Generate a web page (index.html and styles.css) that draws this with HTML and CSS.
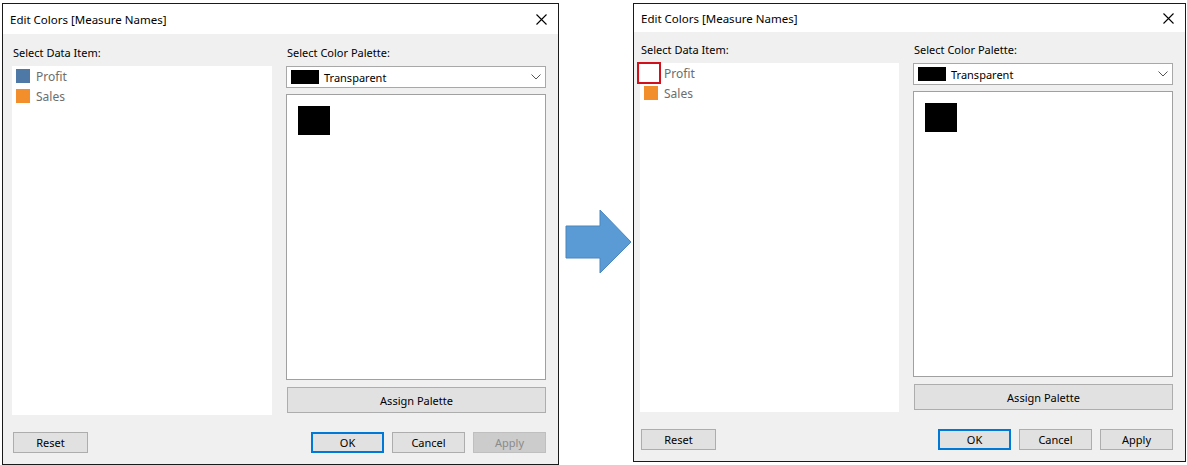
FILE: index.html
```html
<!DOCTYPE html>
<html lang="en">
<head>
    <meta charset="UTF-8">
    <title>Edit Colors</title>
    <link rel="stylesheet" href="styles.css">
</head>
<body>
    <div class="page">
        <div class="dlg dlg-a">
            <div class="title">
                <span>Edit Colors [Measure Names]</span>
                <svg class="close" width="11" height="11" viewBox="0 0 11 11"><path d="M0.5 0.5L10.5 10.5M10.5 0.5L0.5 10.5" stroke="#000" stroke-width="1.1"/></svg>
            </div>
            <div class="body">
                <div class="col">
                    <p class="label">Select Data Item:</p>
                    <div class="list">
                        <div class="item"><span class="sw blue"></span>Profit</div>
                        <div class="item"><span class="sw orange"></span>Sales</div>
                    </div>
                </div>
                <div class="col">
                    <p class="label">Select Color Palette:</p>
                    <div class="select">
                        <span class="chip"></span>
                        <span class="sel-text">Transparent</span>
                        <svg class="chev" width="10" height="6" viewBox="0 0 10 6"><path d="M0.5 0.5L5 5L9.5 0.5" fill="none" stroke="#555" stroke-width="1"/></svg>
                    </div>
                    <div class="palette"><span class="big-chip"></span></div>
                    <button class="btn assign">Assign Palette</button>
                </div>
            </div>
            <div class="foot">
                <button class="btn reset">Reset</button>
                <div class="foot-right">
                    <button class="btn ok">OK</button>
                    <button class="btn">Cancel</button>
                    <button class="btn disabled">Apply</button>
                </div>
            </div>
        </div>

        <div class="arrow-col">
            <svg width="68" height="66" viewBox="0 0 68 66"><polygon points="1,17 35,17 35,1 66,33 35,64 35,49 1,49" fill="#5b9bd5" stroke="#4a86bf" stroke-width="1"/></svg>
        </div>

        <div class="dlg dlg-b">
            <div class="title">
                <span>Edit Colors [Measure Names]</span>
                <svg class="close" width="11" height="11" viewBox="0 0 11 11"><path d="M0.5 0.5L10.5 10.5M10.5 0.5L0.5 10.5" stroke="#000" stroke-width="1.1"/></svg>
            </div>
            <div class="body">
                <div class="col">
                    <p class="label">Select Data Item:</p>
                    <div class="list">
                        <div class="item"><span class="sw empty"></span>Profit<span class="mark"></span></div>
                        <div class="item"><span class="sw orange"></span>Sales</div>
                    </div>
                </div>
                <div class="col">
                    <p class="label">Select Color Palette:</p>
                    <div class="select">
                        <span class="chip"></span>
                        <span class="sel-text">Transparent</span>
                        <svg class="chev" width="10" height="6" viewBox="0 0 10 6"><path d="M0.5 0.5L5 5L9.5 0.5" fill="none" stroke="#555" stroke-width="1"/></svg>
                    </div>
                    <div class="palette"><span class="big-chip"></span></div>
                    <button class="btn assign">Assign Palette</button>
                </div>
            </div>
            <div class="foot">
                <button class="btn reset">Reset</button>
                <div class="foot-right">
                    <button class="btn ok">OK</button>
                    <button class="btn">Cancel</button>
                    <button class="btn">Apply</button>
                </div>
            </div>
        </div>
    </div>
</body>
</html>
```

FILE: styles.css
```css
*{
    margin: 0;
    padding: 0;
    box-sizing: border-box;
}
body{
    background: #fff;
    font-family: "Noto Sans", "Open Sans", sans-serif;
    font-size: 11px;
    color: #000;
}
.page{
    display: flex;
    align-items: flex-start;
    padding: 3px 0 0 2px;
}

/* dialog */
.dlg{
    display: flex;
    flex-direction: column;
    background: #f0f0f0;
    border: 1px solid #1a1a1a;
}
.dlg-a{
    width: 557px;
    height: 462px;
}
.dlg-b{
    width: 553px;
    height: 459px;
}
.title{
    display: flex;
    justify-content: space-between;
    align-items: center;
    background: #fff;
    height: 30px;
    padding: 0 11px 0 7px;
    font-size: 11.5px;
}
.dlg-b .title{
    height: 28px;
    padding-right: 11px;
}
.body{
    display: flex;
    gap: 14px;
    padding: 12px 0 0 9px;
}
.dlg-b .body{
    padding: 11px 0 0 6px;
}
.col{
    display: flex;
    flex-direction: column;
    width: 260px;
}
.dlg-b .col:first-child{
    width: 259px;
}
.label{
    height: 14px;
    line-height: 14px;
    margin-bottom: 6px;
    padding-left: 1px;
}

/* data items */
.list{
    background: #fff;
    height: 349px;
}
.item{
    position: relative;
    display: flex;
    align-items: center;
    height: 20px;
    padding-left: 4px;
    color: #6d6d6d;
    font-size: 12px;
}
.sw{
    width: 14px;
    height: 14px;
    margin-right: 6px;
}
.blue{
    background: #4e79a7;
}
.orange{
    background: #f28e2b;
}
.empty{
    background: #fff;
}
.mark{
    position: absolute;
    left: -3px;
    top: -1px;
    width: 24px;
    height: 22px;
    border: 2px solid #d0101a;
}

/* palette side */
.select{
    display: flex;
    align-items: center;
    height: 22px;
    background: #fff;
    border: 1px solid #a8a8a8;
    padding: 0 4px 0 4px;
}
.chip{
    width: 28px;
    height: 14px;
    background: #000;
    margin-right: 5px;
}
.sel-text{
    flex: 1;
    color: #000;
}
.palette{
    height: 286px;
    margin-top: 6px;
    background: #fff;
    border: 1px solid #a0a0a0;
    padding: 11px 0 0 11px;
}
.big-chip{
    display: block;
    width: 32px;
    height: 29px;
    background: #000;
}

/* buttons */
.btn{
    font-family: inherit;
    font-size: 11px;
    color: #000;
    background: #e1e1e1;
    border: 1px solid #adadad;
    height: 21px;
    width: 73px;
}
.assign{
    height: 26px;
    width: 259px;
    margin: 7px 0 0 1px;
}
.ok{
    border: 2px solid #0078d7;
}
.disabled{
    background: #cccccc;
    border-color: #bfbfbf;
    color: #8a8a8a;
}
.foot{
    display: flex;
    justify-content: space-between;
    margin-top: auto;
    padding: 0 12px 11px 10px;
}
.dlg-b .foot{
    padding: 0 12px 11px 7px;
}
.reset{
    width: 75px;
}
.foot-right{
    display: flex;
    gap: 8px;
}

.arrow-col{
    width: 74px;
    padding: 206px 0 0 6px;
}
```
